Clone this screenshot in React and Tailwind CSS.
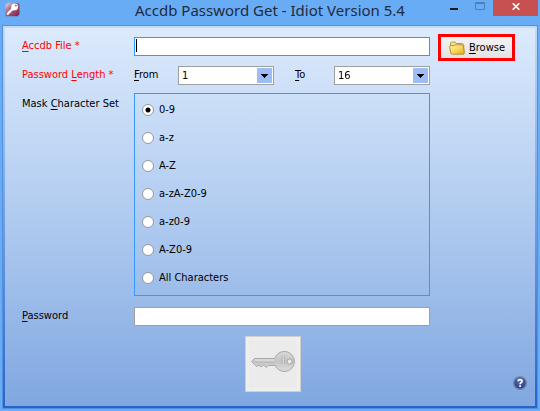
import React, { useState } from "react";

const CHARACTER_SETS = ["0-9", "a-z", "A-Z", "a-zA-Z0-9", "a-z0-9", "A-Z0-9", "All Characters"];
const LENGTHS = Array.from({ length: 16 }, (_, i) => String(i + 1));

function AccessKeyText({ before = "", letter, after }) {
  return (
    <>
      {before}
      <span className="underline underline-offset-2">{letter}</span>
      {after}
    </>
  );
}

function FormRow({ label, className, children }) {
  return (
    <div className={`grid grid-cols-[112px_minmax(0,1fr)_93px] items-start ${className}`}>
      {label}
      {children}
    </div>
  );
}

function LengthSelect({ id, value, onChange }) {
  return (
    <div className="relative w-24 h-[19px]">
      <select
        id={id}
        value={value}
        onChange={(e) => onChange(e.target.value)}
        className="block w-full h-full appearance-none rounded-none border border-[#a0a0a0] bg-white pl-[3px] pr-5 text-[11px] leading-4 outline-none"
      >
        {LENGTHS.map((n) => (
          <option key={n}>{n}</option>
        ))}
      </select>
      <span className="pointer-events-none absolute right-0.5 top-0.5 flex h-[15px] w-[15px] items-center justify-center bg-[#9fbdf5]">
        <svg width="7" height="4" viewBox="0 0 7 4" shapeRendering="crispEdges">
          <path d="M0 0h7v1H6v1H5v1H4v1H3V3H2V2H1V1H0z" fill="#000" />
        </svg>
      </span>
    </div>
  );
}

function AppIcon() {
  return (
    <svg width="15" height="15" viewBox="0 0 15 15">
      <defs>
        <linearGradient id="appBg" x1="0" y1="0" x2="1" y2="1">
          <stop offset="0" stopColor="#f3dfe7" />
          <stop offset="0.35" stopColor="#b0708c" />
          <stop offset="0.65" stopColor="#9a4468" />
          <stop offset="1" stopColor="#7a1c40" />
        </linearGradient>
      </defs>
      <path d="M0.5 3 L3 0.8 H13 L14.5 2 V12 L12.5 14.3 H0.5z" fill="url(#appBg)" />
      <circle cx="9.6" cy="4.9" r="3.4" fill="#fff" />
      <circle cx="10.9" cy="3.6" r="0.9" fill="#9a4468" />
      <path d="M7 5.8 L2 11 L1.8 13 L3.8 12.6 L4.4 11.2 L5.8 10.8 L6.2 9.4 L9.2 7.8z" fill="#fff" />
    </svg>
  );
}

function FolderIcon() {
  return (
    <svg width="16" height="14" viewBox="0 0 16 14">
      <defs>
        <linearGradient id="folderFront" x1="0" y1="0" x2="1" y2="1">
          <stop offset="0" stopColor="#fff3a6" />
          <stop offset="0.55" stopColor="#f8d558" />
          <stop offset="1" stopColor="#dca522" />
        </linearGradient>
      </defs>
      <path d="M1.5 11 V2 L2.5 1 H6 L7.2 2.5 H13.5 L14.8 3.8 V11z" fill="#f6e08a" stroke="#b8912c" strokeWidth="0.9" />
      <path
        d="M0.6 5.6 Q0.5 4.6 1.5 4.6 H5 L6.2 3.8 H13.2 Q14 3.8 14.2 4.6 L15.4 11.8 Q15.4 13.2 14.2 13.2 H3 Q2 13.2 1.8 12.2z"
        fill="url(#folderFront)"
        stroke="#b8872a"
        strokeWidth="0.9"
      />
    </svg>
  );
}

function KeyIcon() {
  return (
    <svg width="44" height="22" viewBox="0 0 44 22">
      <defs>
        <linearGradient id="keyMetal" x1="0" y1="0" x2="0" y2="1">
          <stop offset="0" stopColor="#d9d9d9" />
          <stop offset="0.5" stopColor="#c4c4c4" />
          <stop offset="1" stopColor="#dddddd" />
        </linearGradient>
      </defs>
      <path
        d="M23.8 7.5 A10 10 0 1 1 24.2 14.5 H17.5 L15 16.5 L12.5 14 L10 16 L8 14 L6 15.5 L3.5 13.5 L0.8 10.5 L3.5 7.5z"
        fill="url(#keyMetal)"
        stroke="#a8a8a8"
      />
      <path d="M3.8 9 H23.5" stroke="#dcdcdc" strokeWidth="1.5" />
      <path d="M4 11.5 H23" stroke="#bababa" strokeWidth="0.8" />
      <path d="M31 4.5 V12.5 M33.5 4.5 V12.5" stroke="#b0b0b0" strokeWidth="0.8" />
      <path d="M32.2 4.5 V12.5" stroke="#dcdcdc" strokeWidth="0.8" />
      <circle cx="38.5" cy="10.5" r="2.6" fill="#ebebeb" stroke="#a0a0a0" />
    </svg>
  );
}

function HelpIcon() {
  return (
    <svg width="14" height="14" viewBox="0 0 14 14">
      <defs>
        <radialGradient id="helpBall" cx="0.5" cy="0.35" r="0.65">
          <stop offset="0" stopColor="#5a74b8" />
          <stop offset="1" stopColor="#1f3a86" />
        </radialGradient>
      </defs>
      <circle cx="7" cy="7" r="6.3" fill="url(#helpBall)" stroke="#7583a8" strokeWidth="1.4" />
      <path d="M5 5.3 C5 3.1 9.1 3.1 9.1 5.3 C9.1 6.7 7.1 6.8 7.1 8.3" fill="none" stroke="#fff" strokeWidth="1.6" />
      <rect x="6.2" y="9.3" width="1.8" height="1.7" fill="#fff" />
    </svg>
  );
}

function TitleBar() {
  return (
    <header className="grid h-[25px] grid-cols-[100px_1fr_100px] items-start">
      <div className="pl-[5px] pt-0.5">
        <AppIcon />
      </div>
      <h1 className="whitespace-nowrap text-center font-['Noto_Sans',sans-serif] text-[15px] leading-[21px] text-[#1f2b3a]">
        Accdb Password Get - Idiot Version 5.4
      </h1>
      <div className="flex justify-end pr-0.5">
        <button type="button" aria-label="Minimize" className="flex h-[18px] w-[27px] items-center justify-center">
          <svg width="8" height="2">
            <rect width="8" height="2" fill="#1a1a1a" />
          </svg>
        </button>
        <button type="button" aria-label="Maximize" disabled className="flex h-3 w-[26px] items-center justify-center">
          <svg width="10" height="8">
            <path d="M0.5 0.5h9v7h-9z M0 1.5h10" fill="none" stroke="#4f7fb8" />
          </svg>
        </button>
        <button type="button" aria-label="Close" className="flex h-4 w-[45px] items-center justify-center bg-[#c75050] pb-1">
          <svg width="8" height="7" viewBox="0 0 8 7">
            <path d="M0.7 0.3 L7.3 6.7 M7.3 0.3 L0.7 6.7" stroke="#fff" strokeWidth="1.6" />
          </svg>
        </button>
      </div>
    </header>
  );
}

export default function App() {
  const [file, setFile] = useState("");
  const [from, setFrom] = useState("1");
  const [to, setTo] = useState("16");
  const [charSet, setCharSet] = useState("0-9");

  return (
    <div className="flex min-h-screen flex-col bg-[#69acf6] px-0.5 pb-0.5 font-['DejaVu_Sans_Condensed','Noto_Sans',sans-serif] text-[11px] leading-[18px] text-black">
      <div className="-mx-0.5">
        <TitleBar />
      </div>
      <div className="flex flex-1 border border-[#5590dc] bg-linear-to-b from-[#c3dbf8] via-[#6f9fe6] to-[#2863c9] p-0.5">
        <form
          onSubmit={(e) => e.preventDefault()}
          className="flex flex-1 flex-col bg-linear-to-b from-[#dceafc] via-[#b0cbf0] to-[#80a7e0] pl-[17px] pr-3 pt-[9px]"
        >
          <FormRow
            className="h-[19px]"
            label={
              <label htmlFor="file" className="text-[#ff0000]">
                <AccessKeyText letter="A" after="ccdb File *" />
              </label>
            }
          >
            <div className="relative">
              <input
                id="file"
                autoFocus
                value={file}
                onChange={(e) => setFile(e.target.value)}
                className={`block h-[19px] w-full border border-[#3399ff] bg-white px-px text-[11px] outline-none ${
                  file ? "caret-black" : "caret-transparent"
                }`}
              />
              {!file && <span className="pointer-events-none absolute left-0.5 top-0.5 h-[13px] w-px bg-black" />}
            </div>
            <button
              type="button"
              className="mx-2 -mt-[3px] flex h-[27px] items-center gap-1 border-3 border-[#ff0000] bg-linear-to-b from-[#f4f4f4] to-[#e2e2e2] pl-2"
            >
              <FolderIcon />
              <span>
                <AccessKeyText letter="B" after="rowse" />
              </span>
            </button>
          </FormRow>

          <FormRow
            className="mt-2.5 h-[19px]"
            label={
              <span className="text-[#ff0000]">
                <AccessKeyText before="Password " letter="L" after="ength *" />
              </span>
            }
          >
            <div className="flex justify-between">
              <label htmlFor="from">
                <AccessKeyText letter="F" after="rom" />
              </label>
              <div className="flex w-[252px] justify-between">
                <LengthSelect id="from" value={from} onChange={setFrom} />
                <div className="flex">
                  <label htmlFor="to" className="w-[39px]">
                    <AccessKeyText letter="T" after="o" />
                  </label>
                  <LengthSelect id="to" value={to} onChange={setTo} />
                </div>
              </div>
            </div>
          </FormRow>

          <FormRow
            className="mt-2"
            label={
              <span id="mask-label" className="pt-0.5">
                <AccessKeyText before="Mask " letter="C" after="haracter Set" />
              </span>
            }
          >
            <div
              role="radiogroup"
              aria-labelledby="mask-label"
              className="flex flex-col gap-2.5 border border-[#3399ff] px-[7px] pb-2 pt-[7px]"
            >
              {CHARACTER_SETS.map((set) => (
                <label key={set} className="flex items-center gap-[5px]">
                  <input
                    type="radio"
                    name="charset"
                    checked={charSet === set}
                    onChange={() => setCharSet(set)}
                    className="size-3 appearance-none rounded-full border border-[#999] bg-white checked:bg-[radial-gradient(circle,#000_2px,#fff_3px)]"
                  />
                  {set}
                </label>
              ))}
            </div>
          </FormRow>

          <FormRow
            className="mt-[11px] h-[19px]"
            label={
              <label htmlFor="password">
                <AccessKeyText letter="P" after="assword" />
              </label>
            }
          >
            <input
              id="password"
              readOnly
              className="h-[19px] w-full border border-[#a0a0a0] bg-white px-px text-[11px] outline-none"
            />
          </FormRow>

          <div className="mt-2.5 grid grid-cols-[1fr_56px_1fr] items-end">
            <button
              type="submit"
              disabled
              aria-label="Get password"
              className="col-start-2 flex size-14 items-center justify-center border border-[#d2d0cc] bg-[#ebebeb] pb-1 shadow-[inset_0_0_0_3px_#efefef]"
            >
              <KeyIcon />
            </button>
            <button type="button" aria-label="Help" className="-mr-1 mb-0.5 justify-self-end">
              <HelpIcon />
            </button>
          </div>
        </form>
      </div>
    </div>
  );
}
